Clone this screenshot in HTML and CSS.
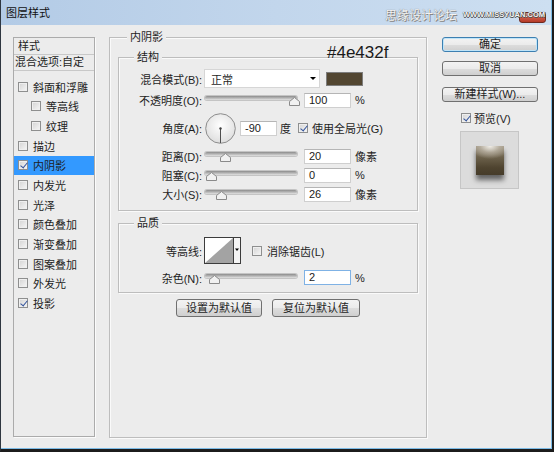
FILE: index.html
```html
<!DOCTYPE html>
<html lang="zh-CN">
<head>
<meta charset="utf-8">
<title>图层样式</title>
<link rel="stylesheet" href="styles.css">
</head>
<body>
<div class="window">
  <div class="titlebar">
    <span class="title">图层样式</span>
    <span class="watermark"><span class="wm-cn">思缘设计论坛</span><span class="wm-en">WWW.MISSYUAN.COM</span></span>
    <span class="close"></span>
  </div>
  <div class="main">
    <div class="styles-list">
      <div class="list-head">样式</div>
      <div class="list-blend">混合选项:自定</div>
      <div class="list-items">
        <div class="item"><span class="cb"></span>斜面和浮雕</div>
        <div class="item sub"><span class="cb"></span>等高线</div>
        <div class="item sub"><span class="cb"></span>纹理</div>
        <div class="item"><span class="cb"></span>描边</div>
        <div class="item selected"><span class="cb checked"></span>内阴影</div>
        <div class="item"><span class="cb"></span>内发光</div>
        <div class="item"><span class="cb"></span>光泽</div>
        <div class="item"><span class="cb"></span>颜色叠加</div>
        <div class="item"><span class="cb"></span>渐变叠加</div>
        <div class="item"><span class="cb"></span>图案叠加</div>
        <div class="item"><span class="cb"></span>外发光</div>
        <div class="item"><span class="cb checked"></span>投影</div>
      </div>
    </div>

    <div class="group outer">
      <div class="group-title outer-title">内阴影</div>
      <div class="group inner structure">
        <div class="group-title inner-title">结构</div>
        <div class="row row-blend">
          <span class="lbl">混合模式(B):</span>
          <div class="select"><span>正常</span><span class="arrow"></span></div>
          <div class="swatch"></div>
        </div>
        <div class="row row-opacity">
          <span class="lbl">不透明度(O):</span>
          <div class="slider"><div class="track"></div><svg class="thumb" style="left:84px" width="11" height="9" viewBox="0 0 11 9"><path d="M0.5 8.5 V4.5 L5.5 0.5 L10.5 4.5 V8.5 Z" fill="#f1f1f1" stroke="#8a8a8a"/></svg></div>
          <div class="field">100</div>
          <span class="unit">%</span>
        </div>
        <div class="row row-angle">
          <span class="lbl">角度(A):</span>
          <svg class="dial" width="31" height="31" viewBox="0 0 31 31"><defs><radialGradient id="dialg" cx="50%" cy="40%" r="60%"><stop offset="0" stop-color="#ffffff"/><stop offset="1" stop-color="#dedede"/></radialGradient></defs><circle cx="15.5" cy="15.5" r="14.8" fill="url(#dialg)" stroke="#8d8d8d"/><line x1="15.5" y1="15.5" x2="15.5" y2="30" stroke="#505050"/><circle cx="15.5" cy="15.5" r="1.2" fill="#404040"/></svg>
          <div class="field field-angle">-90</div>
          <span class="unit unit-deg">度</span>
          <span class="cb checked cb-global"></span>
          <span class="check-label">使用全局光(G)</span>
        </div>
        <div class="row row-s row-dist">
          <span class="lbl">距离(D):</span>
          <div class="slider"><div class="track"></div><svg class="thumb" style="left:15px" width="11" height="9" viewBox="0 0 11 9"><path d="M0.5 8.5 V4.5 L5.5 0.5 L10.5 4.5 V8.5 Z" fill="#f1f1f1" stroke="#8a8a8a"/></svg></div>
          <div class="field">20</div>
          <span class="unit">像素</span>
        </div>
        <div class="row row-s">
          <span class="lbl">阻塞(C):</span>
          <div class="slider"><div class="track"></div><svg class="thumb" style="left:1px" width="11" height="9" viewBox="0 0 11 9"><path d="M0.5 8.5 V4.5 L5.5 0.5 L10.5 4.5 V8.5 Z" fill="#f1f1f1" stroke="#8a8a8a"/></svg></div>
          <div class="field">0</div>
          <span class="unit">%</span>
        </div>
        <div class="row row-s">
          <span class="lbl">大小(S):</span>
          <div class="slider"><div class="track"></div><svg class="thumb" style="left:11px" width="11" height="9" viewBox="0 0 11 9"><path d="M0.5 8.5 V4.5 L5.5 0.5 L10.5 4.5 V8.5 Z" fill="#f1f1f1" stroke="#8a8a8a"/></svg></div>
          <div class="field">26</div>
          <span class="unit">像素</span>
        </div>
      </div>

      <div class="group inner quality">
        <div class="group-title inner-title">品质</div>
        <div class="row row-contour">
          <span class="lbl">等高线:</span>
          <svg class="contour" width="37" height="27" viewBox="0 0 37 27"><rect x="0.5" y="0.5" width="36" height="26" fill="#f4f4f4" stroke="#3c3c3c"/><rect x="1" y="1" width="28" height="25" fill="#ffffff"/><polygon points="1,26 29,1 29,26" fill="#a3a3a3"/><line x1="29.5" y1="0.5" x2="29.5" y2="26.5" stroke="#3c3c3c"/><polygon points="31,11.5 35,11.5 33,14" fill="#000"/></svg>
          <span class="cb cb-aa"></span>
          <span class="check-label">消除锯齿(L)</span>
        </div>
        <div class="row row-noise">
          <span class="lbl">杂色(N):</span>
          <div class="slider"><div class="track"></div><svg class="thumb" style="left:4px" width="11" height="9" viewBox="0 0 11 9"><path d="M0.5 8.5 V4.5 L5.5 0.5 L10.5 4.5 V8.5 Z" fill="#f1f1f1" stroke="#8a8a8a"/></svg></div>
          <div class="field field-focus">2</div>
          <span class="unit">%</span>
        </div>
      </div>

      <div class="default-buttons">
        <div class="btn btn-set">设置为默认值</div>
        <div class="btn btn-reset">复位为默认值</div>
      </div>
    </div>

    <div class="side">
      <div class="btn btn-side btn-default">确定</div>
      <div class="btn btn-side btn-cancel">取消</div>
      <div class="btn btn-side btn-new">新建样式(W)...</div>
      <div class="preview-check"><span class="cb checked"></span><span class="check-label">预览(V)</span></div>
      <div class="preview"><div class="preview-swatch"></div></div>
    </div>
  </div>
  <div class="annotation">#4e432f</div>
</div>
</body>
</html>
```

FILE: styles.css
```css
* { box-sizing: border-box; }
html, body { margin: 0; padding: 0; }
body {
  width: 554px;
  height: 452px;
  overflow: hidden;
  background: #ececec;
  font-family: "Liberation Sans", "Noto Sans CJK SC", sans-serif;
  font-size: 11px;
  color: #1e1e1e;
}

.window {
  position: relative;
  width: 554px;
  height: 452px;
  background: #ececec;
  border-left: 1px solid #2e3640;
  border-right: 2px solid #1c1c1c;
  border-bottom: 3px solid #1c1c1c;
  box-shadow: inset -1px -1px 0 #7cbbe6;
  display: flex;
  flex-direction: column;
}

/* title bar */
.titlebar {
  position: relative;
  height: 25px;
  flex-shrink: 0;
  display: flex;
  align-items: center;
  padding-left: 5px;
  background: linear-gradient(90deg, #b3cbe6 0%, #c2d6ec 50%, #cddff1 100%);
  border-right: 1px solid #7cbbe6;
}
.title { font-size: 11px; color: #111; line-height: 14px; }
.watermark {
  position: relative;
  z-index: 2;
  margin-left: auto;
  margin-right: 6px;
  padding-top: 4px;
  display: flex;
  align-items: center;
  gap: 6px;
}
.wm-cn {
  font-family: "Noto Sans CJK SC", sans-serif;
  font-size: 12px;
  color: #f4f4f4;
  text-shadow: 0 0 1px #6a6a6a, 1px 1px 0 #8a8a8a;
  line-height: 14px;
}
.wm-en {
  font-family: "Liberation Sans", sans-serif;
  font-size: 7.5px;
  font-weight: bold;
  color: #f6f6f6;
  text-shadow: 0 0 1px #333, 1px 0 0 #555, 0 1px 0 #555;
  line-height: 10px;
}
.close {
  position: absolute;
  top: 12px;
  right: 5px;
  width: 27px;
  height: 11px;
  border: 1px solid #6e2a1f;
  border-radius: 3px;
  background: linear-gradient(#e3a08e, #cd5a48 50%, #b53a27);
}

/* main area */
.main {
  display: flex;
  padding: 12px 0 0 12px;
}

/* left style list */
.styles-list {
  width: 82px;
  height: 400px;
  border: 1px solid #ababab;
  box-shadow: 1px 1px 0 #fbfbfb;
  flex-shrink: 0;
}
.list-head {
  height: 17px;
  line-height: 16px;
  padding-left: 4px;
  border-bottom: 1px solid #c8c8c8;
}
.list-blend {
  height: 16px;
  line-height: 14px;
  padding-left: 1px;
  border-bottom: 1px solid #c8c8c8;
  white-space: nowrap;
}
.list-items { padding-top: 6px; }
.item {
  height: 19.67px;
  display: flex;
  align-items: center;
  padding-left: 4px;
  white-space: nowrap;
}
.item.sub { padding-left: 17px; }
.item .cb { margin-right: 5px; }
.item.selected { background: #3399ff; }

/* checkbox */
.cb {
  position: relative;
  display: inline-block;
  width: 10px;
  height: 10px;
  flex-shrink: 0;
  border: 1px solid #8e8f8f;
  background: linear-gradient(135deg, #d3d3d3, #f7f7f7);
  box-shadow: inset 0 0 0 1px #efefef;
}
.cb.checked::after {
  content: "";
  position: absolute;
  left: 2.5px;
  top: 0px;
  width: 3px;
  height: 6px;
  border: solid #33539c;
  border-width: 0 1.5px 1.5px 0;
  transform: rotate(40deg);
}

/* groups */
.group {
  border: 1px solid #bdbdbd;
  box-shadow: inset 1px 1px 0 #fafafa, 1px 1px 0 #fafafa;
}
.group-title {
  width: fit-content;
  line-height: 14px;
  padding: 0 3px;
  margin-top: -8px;
  background: #ececec;
  white-space: nowrap;
}
.outer {
  width: 318px;
  height: 401px;
  margin-left: 14px;
  padding: 0 8px;
  flex-shrink: 0;
}
.outer-title { margin-left: 9px; }
.inner { width: 300px; }
.inner-title { margin-left: 15px; }
.structure { margin-top: 13px; padding-bottom: 8px; }
.quality { margin-top: 12px; padding-bottom: 7px; }

.row {
  display: flex;
  align-items: center;
  white-space: nowrap;
}
.lbl {
  width: 83px;
  text-align: right;
  flex-shrink: 0;
}
.row-blend { margin-top: 4px; height: 21px; }
.row-opacity { margin-top: 2px; height: 18px; }
.row-angle { margin-top: 3px; height: 32px; }
.row-s { margin-top: 3px; height: 16px; }
.row-s.row-dist { margin-top: 4px; }
.row-contour { margin-top: 7px; height: 27px; }
.row-noise { margin-top: 6px; height: 15px; }

.select {
  margin-left: 2px;
  width: 116px;
  height: 19px;
  background: #fff;
  border: 1px solid #d6d6d6;
  display: flex;
  align-items: center;
  padding-left: 6px;
  padding-right: 3px;
}
.select .arrow {
  margin-left: auto;
  width: 0;
  height: 0;
  border-left: 3px solid transparent;
  border-right: 3px solid transparent;
  border-top: 3px solid #000;
}
.swatch {
  margin-left: 6px;
  width: 37px;
  height: 14px;
  background: #524631;
  border: 1px solid #7d7d7d;
}

.slider {
  position: relative;
  margin-left: 3px;
  width: 92px;
  height: 14px;
  flex-shrink: 0;
}
.track {
  margin-top: 3px;
  height: 4px;
  border-radius: 2px;
  background: linear-gradient(#8c8c8c, #bdbdbd 60%, #e2e2e2);
  box-shadow: 0 0 0 1px #c4c4c4;
}
.thumb {
  position: absolute;
  top: 4px;
  display: block;
}

.field {
  margin-left: 7px;
  width: 47px;
  height: 15px;
  background: #fff;
  border: 1px solid #cfcfcf;
  border-top-color: #b5b5b5;
  line-height: 13px;
  padding-left: 4px;
  color: #1a1a1a;
}
.field-focus { border-color: #7fb2e5; }
.field-angle { margin-left: 4px; width: 37px; }
.unit { margin-left: 4px; }
.unit-deg { margin-left: 3px; }

.dial { margin-left: 3px; display: block; }
.cb-global { margin-left: 7px; }
.check-label { margin-left: 4px; }
.contour { margin-left: 2px; display: block; }
.cb-aa { margin-left: 11px; }
.row-contour .check-label { margin-left: 5px; }

/* default buttons */
.default-buttons {
  margin-top: 6px;
  display: flex;
  justify-content: center;
  gap: 10px;
}
.btn {
  height: 18px;
  border: 1px solid #707070;
  border-radius: 3px;
  background: linear-gradient(#f3f3f3 0%, #ebebeb 50%, #dddddd 51%, #cfcfcf 100%);
  text-align: center;
  line-height: 16px;
  white-space: nowrap;
}
.btn-set { width: 86px; }
.btn-reset { width: 88px; }

/* right column */
.side {
  margin-left: 15px;
  width: 96px;
  flex-shrink: 0;
}
.btn-side { height: 15px; line-height: 13px; }
.btn-default {
  border-color: #3c7fb1;
  box-shadow: inset 0 0 0 1px #bfe4f8;
}
.btn-cancel { margin-top: 9px; }
.btn-new { margin-top: 11px; }
.preview-check {
  margin-top: 10px;
  height: 11px;
  padding-left: 19px;
  display: flex;
  align-items: center;
}
.preview-check .check-label { margin-left: 3px; }
.preview {
  margin-top: 8px;
  margin-left: 18px;
  width: 59px;
  height: 58px;
  border: 1px solid #c6c6c6;
  background: #dcdcdc;
  display: flex;
  align-items: center;
  justify-content: center;
}
.preview-swatch {
  width: 28px;
  height: 29px;
  background:
    radial-gradient(ellipse 70% 45% at 50% 0%, rgba(245,243,238,0.95) 0%, rgba(200,193,180,0.6) 50%, rgba(200,193,180,0) 100%),
    linear-gradient(#9c927f 0%, #6b604a 40%, #4e432f 75%, #463c2a 100%);
  box-shadow: 0 5px 5px rgba(0,0,0,0.55);
}

/* annotation overlay */
.annotation {
  position: absolute;
  left: 326px;
  top: 43px;
  font-family: "Liberation Sans", sans-serif;
  font-size: 17px;
  line-height: 20px;
  color: #1a1a1a;
}
```
